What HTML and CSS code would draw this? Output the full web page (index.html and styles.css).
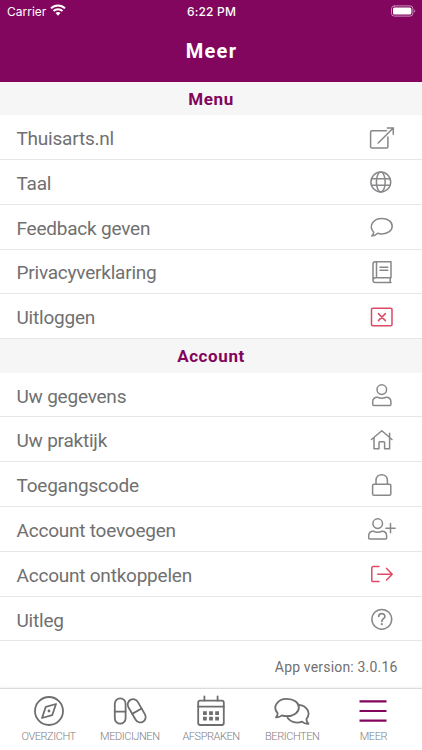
FILE: index.html
```html
<!DOCTYPE html>
<html lang="nl">

<head>
    <meta charset="utf-8">
    <title>Meer</title>
    <link rel="stylesheet" href="styles.css">
</head>

<body>
    <header class="header">
        <div class="status">
            <div class="carrier">
                <span>Carrier</span>
                <svg class="wifi" viewBox="0 0 16 12">
                    <path d="M1 4.4a10 10 0 0 1 14 0" />
                    <path d="M3.5 7a6.4 6.4 0 0 1 9 0" />
                    <path class="dot" d="M5.5 9.1a3.6 3.6 0 0 1 5 0L8 11.7z" />
                </svg>
            </div>
            <div class="time">6:22 PM</div>
            <svg class="battery" viewBox="0 0 25 12">
                <rect class="shell" x="0.5" y="0.9" width="21.4" height="10.2" rx="2.8" />
                <rect class="level" x="2" y="2.4" width="18.4" height="7.2" rx="1.5" />
                <path class="cap" d="M23.2 4.4c1.4.5 1.4 2.7 0 3.2z" />
            </svg>
        </div>
        <h1 class="title">Meer</h1>
    </header>

    <main class="content">
        <h2 class="section">Menu</h2>
        <ul class="list">
            <li class="row">
                <span>Thuisarts.nl</span>
                <svg class="icon" viewBox="-16 -16 32 32">
                    <path d="M4.5-7.2H-10.2a1.2 1.2 0 0 0-1.2 1.2V8.7a1.2 1.2 0 0 0 1.2 1.2H4.7a1.2 1.2 0 0 0 1.2-1.2V-1M-3.8 5L11.3-10M5.3-10h6v6.2" />
                </svg>
            </li>
            <li class="row">
                <span>Taal</span>
                <svg class="icon" viewBox="-16 -16 32 32">
                    <circle cx="-1.2" cy="0" r="9.9" />
                    <ellipse cx="-1.2" cy="0" rx="4.4" ry="9.9" />
                    <path d="M-10.5-3.3H8.1M-10.5 3.3H8.1" />
                </svg>
            </li>
            <li class="row">
                <span>Feedback geven</span>
                <svg class="icon" viewBox="-16 -16 32 32">
                    <path d="M-8.3 5.2C-13.5-.5-9.5-8.6 0-8.6C5.8-8.6 10.2-5.2 10.2-.8S5.8 6.9 0 6.9C-1.7 6.9-3 6.7-4.3 6.2C-5.8 7.8-7.8 8.8-10.2 8.9C-9 7.8-8.4 6.6-8.3 5.2z" />
                </svg>
            </li>
            <li class="row">
                <span>Privacyverklaring</span>
                <svg class="icon" viewBox="-16 -16 32 32">
                    <path d="M9 5.8V-10.2H-6.7A2.4 2.4 0 0 0-9-7.8V8.2A2.4 2.4 0 0 0-6.7 10.5H9M9 5.8H-6.7A2.4 2.4 0 0 0-9 8.2M-5.5-10.2V5.8M8.2 5.8V10.5M-2-4.8H5.8M-2-1.7H5.8" />
                </svg>
            </li>
            <li class="row">
                <span>Uitloggen</span>
                <svg class="icon red" viewBox="-16 -16 32 32">
                    <rect x="-10.5" y="-8.8" width="20.5" height="17.6" rx="1.2" />
                    <path d="M-3.6-3.4L3.4 3.6M3.4-3.4L-3.6 3.6" />
                </svg>
            </li>
        </ul>

        <h2 class="section">Account</h2>
        <ul class="list">
            <li class="row">
                <span>Uw gegevens</span>
                <svg class="icon" viewBox="-16 -16 32 32">
                    <circle cx="-0.2" cy="-5.4" r="4.8" />
                    <path d="M-4.5 2.2C-1.5 3.5 1.2 3.5 4.1 2.2C7 2 8.9 4 8.9 6.8V9.2A1.2 1.2 0 0 1 7.7 10.4H-8.1A1.2 1.2 0 0 1-9.3 9.2V6.8C-9.3 4-7.4 2-4.5 2.2z" />
                </svg>
            </li>
            <li class="row">
                <span>Uw praktijk</span>
                <svg class="icon" viewBox="-16 -16 32 32">
                    <path d="M-10.5-.5L-.2-9.2L10-.5M-8-2.4V8.7H-3V2.6A.8.8 0 0 1-2.2 1.8H1.8A.8.8 0 0 1 2.6 2.6V8.7H7.6V-6.8" />
                </svg>
            </li>
            <li class="row">
                <span>Toegangscode</span>
                <svg class="icon" viewBox="-16 -16 32 32">
                    <rect x="-9.4" y="-0.8" width="18.2" height="11" rx="1.3" />
                    <path d="M-6-.8V-4.5C-6-12.2 5.4-12.2 5.4-4.5V-.8" />
                </svg>
            </li>
            <li class="row">
                <span>Account toevoegen</span>
                <svg class="icon" viewBox="-16 -16 32 32">
                    <circle cx="-4.3" cy="-5.4" r="4.8" />
                    <path d="M-8.6 2.2C-5.6 3.5-2.9 3.5 0 2.2C2.9 2 4.6 4 4.6 6.8V8.9A1.2 1.2 0 0 1 3.4 10.1H-12.1A1.2 1.2 0 0 1-13.3 8.9V6.8C-13.3 4-11.5 2-8.6 2.2zM8.5-5.4V3.8M3.9-.8H13.1" />
                </svg>
            </li>
            <li class="row">
                <span>Account ontkoppelen</span>
                <svg class="icon red" viewBox="-16 -16 32 32">
                    <path d="M-3-7.4H-9A1.2 1.2 0 0 0-10.2-6.2V6.4A1.2 1.2 0 0 0-9 7.6H-3M-4.2.2H10M4.6-5.6L10.2.2L4.6 6" />
                </svg>
            </li>
            <li class="row">
                <span>Uitleg</span>
                <svg class="icon" viewBox="-16 -16 32 32">
                    <circle cx="-0.2" cy="0.3" r="9.9" />
                    <path class="mark" d="M-3.3-2.6C-3.2-6.3 3-6.2 2.9-2.5C2.8-.3-.2-.3-.2 2.5" />
                    <circle class="dot" cx="-0.2" cy="5.2" r="1.1" />
                </svg>
            </li>
        </ul>
        <p class="version">App version: 3.0.16</p>
    </main>

    <nav class="tabs">
        <a class="tab">
            <svg class="tab-icon" viewBox="-18 -16 36 32">
                <circle cx="0" cy="0" r="14" />
                <path d="M7-7L3.2 4.2L-7 7L-3.2-4.2z" />
                <circle class="dot" cx="0" cy="0" r="1.4" />
            </svg>
            <span>OVERZICHT</span>
        </a>
        <a class="tab">
            <svg class="tab-icon" viewBox="-18 -16 36 32">
                <rect x="-15.2" y="-12.6" width="10.8" height="25.2" rx="5.4" />
                <path d="M-15.2.6H-4.4" />
                <g transform="translate(6.7 -0.2) rotate(-30)">
                    <rect x="-5.4" y="-12.6" width="10.8" height="25.2" rx="5.4" />
                    <path d="M-5.4.4H5.4" />
                </g>
            </svg>
            <span>MEDICIJNEN</span>
        </a>
        <a class="tab">
            <svg class="tab-icon" viewBox="-18 -16 36 32">
                <rect x="-12.8" y="-10.4" width="25.6" height="24.4" rx="2" />
                <path d="M-12.8-4.4H12.8M-6.6-14.6V-10.4M6.6-14.6V-10.4" />
                <path class="dot" d="M-8 .2h3.8V4H-8zM-1.9.2h3.8V4h-3.8zM4.2.2H8V4H4.2zM-8 5.8h3.8v3.8H-8zM-1.9 5.8h3.8v3.8h-3.8zM4.2 5.8H8v3.8H4.2z" />
            </svg>
            <span>AFSPRAKEN</span>
        </a>
        <a class="tab">
            <svg class="tab-icon" viewBox="-18 -16 36 32">
                <path d="M-14.4 2.2C-20-4-14.5-12.2-5.2-12.2C1.6-12.2 6.9-8.4 6.9-3.5S1.6 5.2-5.2 5.2C-7 5.2-8.6 5-10 4.4C-11.5 5.8-13.5 6.4-16 6.3C-14.8 5-14.3 3.8-14.4 2.2z" />
                <path d="M6.8-6.2C14.5-5.8 19.6 1.8 14.4 8C14.4 9.8 15.2 11.4 16.4 12.8C13.8 13 11.6 12.2 10 10.6C4 13-3 10.6-5 5.2" />
            </svg>
            <span>BERICHTEN</span>
        </a>
        <a class="tab active">
            <svg class="tab-icon" viewBox="-18 -16 36 32">
                <path d="M-13.5-9.6H13.5M-13.5 0H13.5M-13.5 9.6H13.5" />
            </svg>
            <span>MEER</span>
        </a>
    </nav>
</body>

</html>
```
FILE: styles.css
```css
* {
    box-sizing: border-box;
}

body {
    width: 422px;
    height: 750px;
    margin: 0;
    display: flex;
    flex-direction: column;
    overflow: hidden;
    background: #fff;
    color: #707070;
    font-family: Roboto, "Liberation Sans", sans-serif;
}

svg {
    fill: none;
    stroke-linecap: round;
    stroke-linejoin: round;
}

.header {
    height: 81.7px;
    background: #82065e;
    color: #fff;
}

.status {
    display: grid;
    grid-template-columns: 1fr auto 1fr;
    align-items: center;
    height: 22px;
    padding: 0 6px 0 7px;
    font-family: Inter, sans-serif;
    font-size: 12px;
}

.carrier {
    display: flex;
    align-items: center;
    gap: 4px;
}

.time {
    font-weight: 500;
    letter-spacing: 0.2px;
}

.wifi {
    width: 16px;
    height: 12px;
    margin-top: -2px;
    stroke: #fff;
    stroke-width: 2;
    stroke-linecap: butt;
}

.wifi .dot {
    fill: #fff;
    stroke: none;
}

.battery {
    width: 25px;
    height: 12px;
    margin-top: -1px;
    justify-self: end;
}

.shell {
    stroke: #c890b9;
}

.level {
    fill: #fff;
}

.cap {
    fill: #c890b9;
}

.title {
    margin: 0;
    padding-left: 1px;
    line-height: 59px;
    font-size: 20px;
    font-weight: 700;
    letter-spacing: 1.3px;
    text-align: center;
}

.content {
    flex: 1;
}

.section {
    height: 33.5px;
    margin: 0;
    background: #f6f6f6;
    color: #82065e;
    font-size: 17px;
    font-weight: 700;
    line-height: 34px;
    letter-spacing: 0.6px;
    text-align: center;
}

.list {
    margin: 0;
    padding: 0;
    list-style: none;
}

.row {
    display: flex;
    align-items: center;
    justify-content: space-between;
    height: 44.8px;
    padding: 1px 24px 0 16.5px;
    border-bottom: 1px solid #e6e6e6;
    font-size: 19px;
    letter-spacing: -0.22px;
}

.row span {
    padding-top: 2px;
}

.icon {
    width: 32px;
    height: 32px;
    stroke: #88888b;
    stroke-width: 1.5;
}

.icon .dot {
    fill: #88888b;
    stroke: none;
}

.icon .mark {
    stroke-width: 1.7;
}

.icon.red {
    stroke: #dc4a66;
}

.version {
    margin: 0;
    padding: 16px 24.5px 0 0;
    font-size: 14px;
    line-height: 20px;
    letter-spacing: 0.18px;
    text-align: right;
}

.tabs {
    display: flex;
    height: 62px;
    padding: 0 8px;
    border-top: 1px solid #dcdcdc;
    box-shadow: 0 -1px 2px rgba(0, 0, 0, 0.06);
}

.tab {
    flex: 1;
    display: flex;
    flex-direction: column;
    align-items: center;
    padding-top: 6px;
    color: #808080;
    font-size: 11px;
    font-weight: 300;
    line-height: 20px;
    letter-spacing: -0.45px;
}

.tab-icon {
    width: 36px;
    height: 32px;
    stroke: #6e6e6e;
    stroke-width: 1.8;
}

.tab-icon .dot {
    fill: #6e6e6e;
    stroke: none;
}

.active .tab-icon {
    stroke: #82065e;
    stroke-width: 2.2;
    stroke-linecap: butt;
}
```
